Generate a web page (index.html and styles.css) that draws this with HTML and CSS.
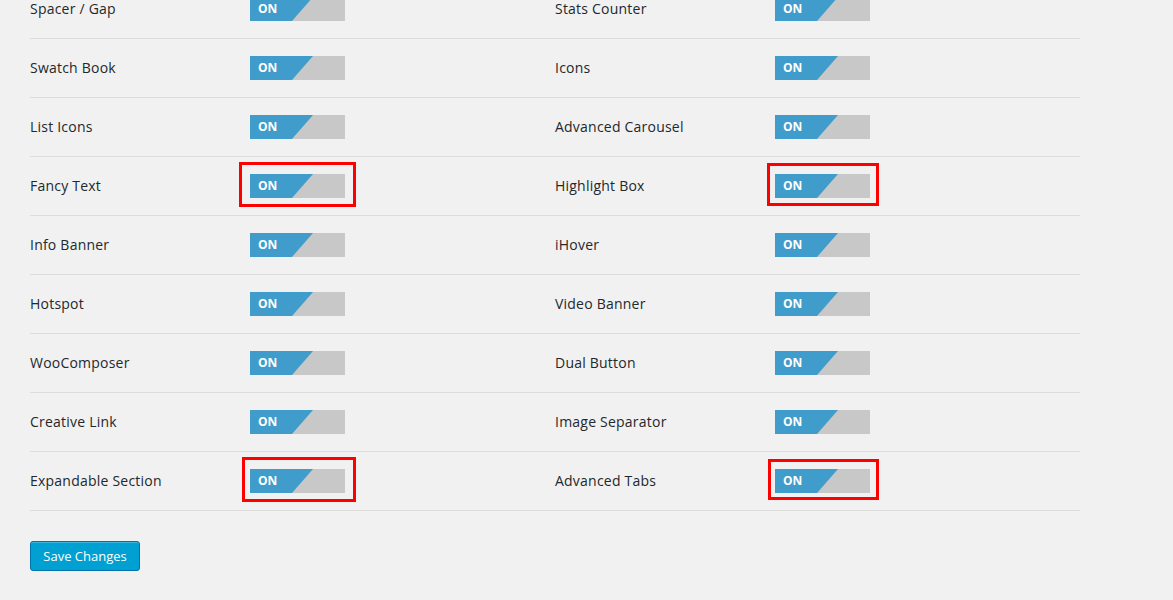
FILE: index.html
```html
<!DOCTYPE html>
<html>
<head>
<meta charset="utf-8">
<link rel="stylesheet" href="styles.css">
</head>
<body>
<div class="wrap">
  <div class="grid">
    <div class="cell"><span class="label">Spacer / Gap</span><span class="toggle"><span class="on">ON</span></span></div>
    <div class="cell"><span class="label">Stats Counter</span><span class="toggle"><span class="on">ON</span></span></div>
    <div class="cell"><span class="label">Swatch Book</span><span class="toggle"><span class="on">ON</span></span></div>
    <div class="cell"><span class="label">Icons</span><span class="toggle"><span class="on">ON</span></span></div>
    <div class="cell"><span class="label">List Icons</span><span class="toggle"><span class="on">ON</span></span></div>
    <div class="cell"><span class="label">Advanced Carousel</span><span class="toggle"><span class="on">ON</span></span></div>
    <div class="cell"><span class="label">Fancy Text</span><span class="toggle"><span class="on">ON</span><span class="mark mark-l1"></span></span></div>
    <div class="cell"><span class="label">Highlight Box</span><span class="toggle"><span class="on">ON</span><span class="mark mark-r1"></span></span></div>
    <div class="cell"><span class="label">Info Banner</span><span class="toggle"><span class="on">ON</span></span></div>
    <div class="cell"><span class="label">iHover</span><span class="toggle"><span class="on">ON</span></span></div>
    <div class="cell"><span class="label">Hotspot</span><span class="toggle"><span class="on">ON</span></span></div>
    <div class="cell"><span class="label">Video Banner</span><span class="toggle"><span class="on">ON</span></span></div>
    <div class="cell"><span class="label">WooComposer</span><span class="toggle"><span class="on">ON</span></span></div>
    <div class="cell"><span class="label">Dual Button</span><span class="toggle"><span class="on">ON</span></span></div>
    <div class="cell"><span class="label">Creative Link</span><span class="toggle"><span class="on">ON</span></span></div>
    <div class="cell"><span class="label">Image Separator</span><span class="toggle"><span class="on">ON</span></span></div>
    <div class="cell"><span class="label">Expandable Section</span><span class="toggle"><span class="on">ON</span><span class="mark mark-l2"></span></span></div>
    <div class="cell"><span class="label">Advanced Tabs</span><span class="toggle"><span class="on">ON</span><span class="mark mark-r2"></span></span></div>
  </div>
  <button class="save">Save Changes</button>
</div>
</body>
</html>
```

FILE: styles.css
```css
html, body {
  margin: 0;
  padding: 0;
  background: #f1f1f1;
  font-family: "Open Sans", "Liberation Sans", sans-serif;
  color: #23282d;
  overflow: hidden;
}

.wrap {
  margin-top: -20px;
  padding-left: 30px;
}

.grid {
  width: 1050px;
  display: grid;
  grid-template-columns: 525px 525px;
}

.cell {
  height: 58px;
  border-bottom: 1px solid #dcdcdc;
  display: flex;
  align-items: center;
}

.label {
  width: 220px;
  font-size: 14px;
  letter-spacing: 0.22px;
  padding-bottom: 2px;
}

.toggle {
  position: relative;
  width: 95px;
  height: 24px;
  background: #c8c8c8;
  display: flex;
  align-items: center;
}

.toggle::before {
  content: "";
  position: absolute;
  left: 0;
  top: 0;
  width: 64px;
  height: 24px;
  background: #409cca;
  clip-path: polygon(0 0, 63px 0, 42px 100%, 0 100%);
}

.on {
  position: relative;
  padding-left: 8px;
  padding-bottom: 2px;
  color: #fff;
  font-weight: 700;
  font-size: 12px;
}

.mark {
  position: absolute;
  border: 3px solid #ff0000;
}

.mark-l1 { left: -11px; right: -11px; top: -12px; bottom: -9px; }
.mark-r1 { left: -8px; right: -9px; top: -11px; bottom: -8px; }
.mark-l2 { left: -8px; right: -11px; top: -12px; bottom: -9px; }
.mark-r2 { left: -7px; right: -9px; top: -10px; bottom: -7px; }

.save {
  display: block;
  margin-top: 30px;
  width: 110px;
  height: 30px;
  background: #00a0d2;
  border: 1px solid #0073aa;
  border-radius: 3px;
  color: #fff;
  font-family: "Open Sans", "Liberation Sans", sans-serif;
  font-size: 13px;
  padding: 0;
  box-shadow: inset 0 1px 0 rgba(120, 200, 230, 0.5);
}
```
